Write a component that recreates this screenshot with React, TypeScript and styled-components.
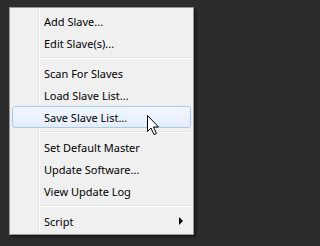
import React from "react";
import styled, { createGlobalStyle } from "styled-components";

const GlobalStyle = createGlobalStyle`
  html, body {
    margin: 0;
    padding: 0;
    background: #2c2c2c;
  }
  body {
    width: 204px;
    height: 246px;
    overflow: hidden;
    font-family: "Noto Sans", "Liberation Sans", sans-serif;
  }
`;

const Desktop = styled.div`
  position: relative;
  width: 204px;
  height: 246px;
  padding: 7px 0 0 9px;
  box-sizing: border-box;
`;

const Menu = styled.ul`
  width: 185px;
  margin: 0;
  padding: 2px 0;
  list-style: none;
  box-sizing: border-box;
  border: 1px solid #979797;
  background-color: #f0f0f0;
  background-image: linear-gradient(
    to right,
    transparent 28px,
    #e2e3e3 28px,
    #e2e3e3 29px,
    #ffffff 29px,
    #ffffff 30px,
    transparent 30px
  );
  box-shadow: 2px 2px 2px rgba(0, 0, 0, 0.45);
`;

const Item = styled.li<{ $hot?: boolean }>`
  position: relative;
  height: 22px;
  margin: 0 2px;
  padding-left: 31px;
  box-sizing: border-box;
  display: flex;
  align-items: center;
  font-size: 11px;
  color: #000;
  white-space: nowrap;
  border: 1px solid ${({ $hot }) => ($hot ? "#a8caf0" : "transparent")};
  border-radius: 3px;
  background: ${({ $hot }) =>
    $hot ? "linear-gradient(#f2f7fe, #e3edfb)" : "transparent"};
`;

const Separator = styled.li`
  height: 8px;
  margin: 0 2px 0 30px;
  display: flex;
  flex-direction: column;
  justify-content: center;

  &::before {
    content: "";
    height: 1px;
    background: #e2e3e3;
  }
  &::after {
    content: "";
    height: 1px;
    background: #ffffff;
  }
`;

const SubArrow = styled.span`
  position: absolute;
  right: 7px;
  top: 50%;
  margin-top: -4px;
  width: 0;
  height: 0;
  border-top: 4px solid transparent;
  border-bottom: 4px solid transparent;
  border-left: 4px solid #000;
`;

const Cursor = styled.svg`
  position: absolute;
  left: 146px;
  top: 114px;
  pointer-events: none;
`;

type Entry = { label: string; hot?: boolean; sub?: boolean } | "sep";

const entries: Entry[] = [
  { label: "Add Slave..." },
  { label: "Edit Slave(s)..." },
  "sep",
  { label: "Scan For Slaves" },
  { label: "Load Slave List..." },
  { label: "Save Slave List...", hot: true },
  "sep",
  { label: "Set Default Master" },
  { label: "Update Software..." },
  { label: "View Update Log" },
  "sep",
  { label: "Script", sub: true },
];

export default function App() {
  return (
    <>
      <GlobalStyle />
      <Desktop>
        <Menu>
          {entries.map((e, i) =>
            e === "sep" ? (
              <Separator key={i} />
            ) : (
              <Item key={i} $hot={e.hot}>
                {e.label}
                {e.sub && <SubArrow />}
              </Item>
            )
          )}
        </Menu>
        <Cursor width="14" height="22" viewBox="0 0 14 22">
          <path
            d="M1.5 1.5 L1.5 17.5 L5 14 L8 20.5 L10.5 19.5 L7.5 13 L12.5 13 Z"
            fill="#fff"
            stroke="#000"
            strokeWidth="1"
            strokeLinejoin="miter"
          />
        </Cursor>
      </Desktop>
    </>
  );
}
